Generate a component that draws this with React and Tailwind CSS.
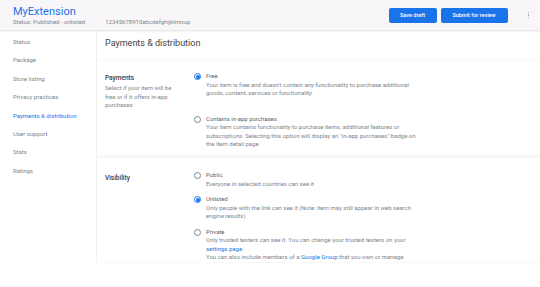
import React from 'react';

const navItems = [
  'Status',
  'Package',
  'Store listing',
  'Privacy practices',
  'Payments & distribution',
  'User support',
  'Stats',
  'Ratings',
];

const Radio = ({ checked }) => (
  <span
    className={`mt-[1px] w-[7px] h-[7px] rounded-full shrink-0 flex items-center justify-center border ${
      checked ? 'border-[#1a73e8]' : 'border-[#80868b]'
    }`}
  >
    {checked && <span className="w-[4px] h-[4px] rounded-full bg-[#1a73e8]" />}
  </span>
);

const Option = ({ checked, title, children }) => (
  <div className="flex gap-[5px]">
    <Radio checked={checked} />
    <div className="flex flex-col">
      <span className="text-[6px] leading-[8.5px] text-[#5f6368]">{title}</span>
      <div className="text-[6px] leading-[8.5px] text-[#80868b] w-[214px]">{children}</div>
    </div>
  </div>
);

const App = () => {
  return (
    <div className="w-[540px] h-[287px] bg-white overflow-hidden font-['Roboto',sans-serif] flex flex-col">
      {/* Header */}
      <div className="h-[30px] shrink-0 bg-[#f8f6f9] flex items-center pl-[13px] pr-[11px] shadow-[0_1px_2px_rgba(0,0,0,0.12)] relative z-10">
        <div className="flex flex-col">
          <span className="text-[11px] leading-[13px] text-[#1a73e8]">MyExtension</span>
          <div className="flex gap-[20px] text-[6px] leading-[8px] text-[#80868b]">
            <span>Status: Published - unlisted</span>
            <span>12345678910abcdefghijklmnop</span>
          </div>
        </div>
        <div className="ml-auto flex items-center gap-[4px]">
          <button className="h-[15px] w-[48px] rounded-[2px] bg-[#1a73e8] text-white text-[5.5px] font-medium">
            Save draft
          </button>
          <button className="h-[15px] w-[67px] rounded-[2px] bg-[#1a73e8] text-white text-[5.5px] font-medium">
            Submit for review
          </button>
          <div className="ml-[16px] flex flex-col gap-[1px] items-center">
            <span className="w-[1.5px] h-[1.5px] rounded-full bg-[#9aa0a6]" />
            <span className="w-[1.5px] h-[1.5px] rounded-full bg-[#9aa0a6]" />
            <span className="w-[1.5px] h-[1.5px] rounded-full bg-[#9aa0a6]" />
          </div>
        </div>
      </div>

      <div className="flex">
        {/* Sidebar */}
        <div className="w-[97px] h-[233px] shrink-0 border-r border-[#f1f1f1] pt-[8px] pl-[13px] flex flex-col gap-[10.4px]">
          {navItems.map((item) => (
            <span
              key={item}
              className={`text-[6px] leading-[8px] ${
                item === 'Payments & distribution' ? 'text-[#1a73e8]' : 'text-[#80868b]'
              }`}
            >
              {item}
            </span>
          ))}
        </div>

        {/* Content */}
        <div className="flex-1 flex flex-col">
          <div className="h-[30px] pl-[8px] pt-[7px] border-b border-[#f8f8f8]">
            <h1 className="text-[9px] leading-[12px] text-[#3c4043]">Payments &amp; distribution</h1>
          </div>

          <div className="flex pl-[8px] pt-[14px] h-[95px]">
            <div className="w-[89px] shrink-0">
              <div className="text-[6.5px] leading-[8px] font-medium text-[#3c4043]">Payments</div>
              <div className="mt-[2px] text-[6px] leading-[8.5px] text-[#80868b] w-[76px]">
                Select if your item will be free or if it offers in-app purchases
              </div>
            </div>
            <div className="flex flex-col gap-[17px] -mt-[2px]">
              <Option checked title="Free">
                Your item is free and doesn't contain any functionality to purchase additional goods, content, services or functionality
              </Option>
              <Option title="Contains in-app purchases">
                Your item contains functionality to purchase items, additional features or subscriptions. Selecting this option will display an "in-app purchases" badge on the item detail page
              </Option>
            </div>
          </div>

          <div className="h-[3px] bg-[#f7f7f7]" />

          <div className="flex pl-[8px] pt-[16px] h-[105px] border-b border-[#f8f8f8]">
            <div className="w-[89px] shrink-0">
              <div className="text-[6.5px] leading-[8px] font-medium text-[#3c4043]">Visibility</div>
            </div>
            <div className="flex flex-col gap-[7px] -mt-[3px]">
              <Option title="Public">Everyone in selected countries can see it</Option>
              <Option checked title="Unlisted">
                Only people with the link can see it (Note: Item may still appear in web search engine results)
              </Option>
              <Option title="Private">
                <p>
                  Only trusted testers can see it. You can change your trusted testers on your{' '}
                  <span className="text-[#1a73e8]">settings page</span>.
                </p>
                <p>
                  You can also include members of a <span className="text-[#1a73e8]">Google Group</span> that you own or manage.
                </p>
              </Option>
            </div>
          </div>
        </div>
      </div>
    </div>
  );
};

export default App;
